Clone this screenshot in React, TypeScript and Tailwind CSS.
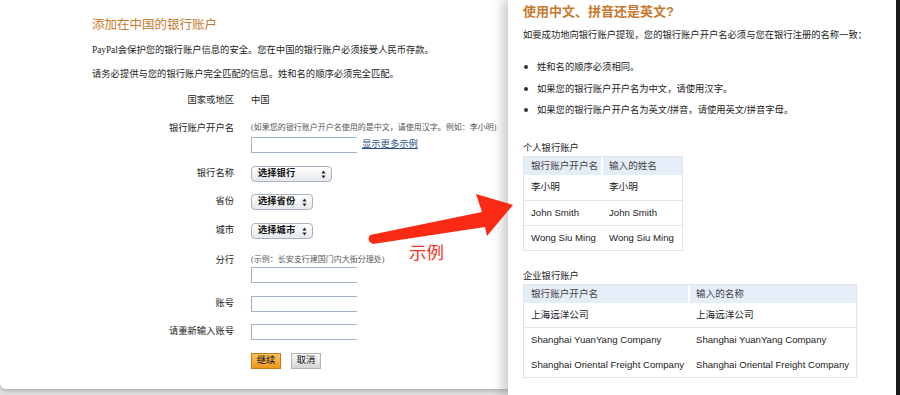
import React from 'react';

const serifCjk = "font-['Liberation_Serif','Noto_Sans_CJK_SC',serif]";
const sansCjk = "font-['Liberation_Sans','Noto_Sans_CJK_SC',sans-serif]";

interface SelectProps {
  label: string;
  width: string;
}

const SelectBox: React.FC<SelectProps> = ({ label, width }) => (
  <div
    className={`${width} h-[16px] flex items-center justify-between pl-[6px] pr-[5px] rounded-[4px] border border-[#a9b4c3] bg-gradient-to-b from-white to-[#e6e8ec] text-[9.3px] font-semibold leading-none text-[#111]`}
  >
    <span>{label}</span>
    <svg width="5" height="9" viewBox="0 0 5 9">
      <path d="M2.5 0.5 L4.5 3.5 L0.5 3.5 Z" fill="#222" />
      <path d="M2.5 8.5 L4.5 5.5 L0.5 5.5 Z" fill="#222" />
    </svg>
  </div>
);

const TextInput: React.FC = () => (
  <div className="w-[106px] h-[16px] border border-r-0 border-[#a3b4c8] bg-white"></div>
);

const FormRow: React.FC<{ label: string; className?: string; children: React.ReactNode }> = ({
  label,
  className,
  children,
}) => (
  <div className={`grid grid-cols-[142px_1fr] gap-x-[17px] items-start ${className ?? ''}`}>
    <div className="text-right leading-[14px] text-[9.3px] text-[#222]">{label}</div>
    <div>{children}</div>
  </div>
);

const LeftPanel: React.FC = () => (
  <div
    className={`w-[508px] h-[389px] shrink-0 bg-white rounded-bl-[6px] shadow-[0_2px_4px_rgba(0,0,0,0.22)] pl-[92px] pt-[16px] ${serifCjk}`}
  >
    <h1 className="text-[12.5px] leading-[18px] text-[#c8782c]">添加在中国的银行账户</h1>
    <p className="mt-[9px] text-[9.3px] leading-[14px] text-[#222]">
      PayPal会保护您的银行账户信息的安全。您在中国的银行账户必须接受人民币存款。
    </p>
    <p className="mt-[10px] text-[9.3px] leading-[14px] text-[#222]">
      请务必提供与您的银行账户完全匹配的信息。姓和名的顺序必须完全匹配。
    </p>

    {/* Form */}
    <div className="mt-[12px] flex flex-col">
      <FormRow label="国家或地区">
        <div className="leading-[14px] text-[9.3px] text-[#222]">中国</div>
      </FormRow>

      <FormRow label="银行账户开户名" className="mt-[14px]">
        <div className="leading-[14px] text-[8px] text-[#555] whitespace-nowrap">
          (如果您的银行账户开户名使用的是中文，请使用汉字。例如：李小明)
        </div>
        <div className="mt-[2px] flex items-center gap-[5px]">
          <TextInput />
          <a className="text-[9.3px] leading-none text-[#2b4f8c] underline">显示更多示例</a>
        </div>
      </FormRow>

      <FormRow label="银行名称" className="mt-[13px]">
        <SelectBox label="选择银行" width="w-[81px]" />
      </FormRow>

      <FormRow label="省份" className="mt-[12px]">
        <SelectBox label="选择省份" width="w-[62px]" />
      </FormRow>

      <FormRow label="城市" className="mt-[13px]">
        <SelectBox label="选择城市" width="w-[62px]" />
      </FormRow>

      <FormRow label="分行" className="mt-[14px]">
        <div className="leading-[14px] text-[8px] text-[#555] whitespace-nowrap">
          (示例：长安支行建国门内大街分理处)
        </div>
        <TextInput />
      </FormRow>

      <FormRow label="账号" className="mt-[13px]">
        <TextInput />
      </FormRow>

      <FormRow label="请重新输入账号" className="mt-[12px]">
        <TextInput />
      </FormRow>

      <FormRow label="" className="mt-[13px]">
        <div className="flex gap-[10px]">
          <button className="w-[30px] h-[16px] border border-[#c27a1a] bg-gradient-to-b from-[#fbc25a] to-[#ef9618] text-[9.3px] leading-none text-[#111]">
            继续
          </button>
          <button className="w-[30px] h-[16px] border border-[#b3b3b3] bg-gradient-to-b from-[#fafafa] to-[#d4d4d4] text-[9.3px] leading-none text-[#111]">
            取消
          </button>
        </div>
      </FormRow>
    </div>
  </div>
);

const bullets = [
  '姓和名的顺序必须相同。',
  '如果您的银行账户开户名为中文，请使用汉字。',
  '如果您的银行账户开户名为英文/拼音，请使用英文/拼音字母。',
];

const personalRows = [
  ['李小明', '李小明'],
  ['John Smith', 'John Smith'],
  ['Wong Siu Ming', 'Wong Siu Ming'],
];

const RightPanel: React.FC = () => (
  <div
    className={`relative z-10 flex-1 h-full bg-white border-r-[4px] border-[#1b1b1b] shadow-[-6px_0_10px_rgba(0,0,0,0.2)] pl-[15px] pt-[4px] text-[#222] ${sansCjk}`}
  >
    <h2 className="text-[13px] leading-[16px] font-semibold text-[#c8782c]">使用中文、拼音还是英文?</h2>
    <p className="mt-[8px] text-[9.3px] leading-[14px]">
      如要成功地向银行账户提现，您的银行账户开户名必须与您在银行注册的名称一致：
    </p>
    <ul className="mt-[18px] flex flex-col gap-[7.5px] text-[9.3px] leading-[14px]">
      {bullets.map((b) => (
        <li key={b} className="flex items-center">
          <span className="w-[4px] h-[4px] ml-[1px] rounded-full bg-[#333]"></span>
          <span className="ml-[9px]">{b}</span>
        </li>
      ))}
    </ul>

    {/* Personal account */}
    <div className="mt-[24px] text-[9.3px] leading-[14px]">个人银行账户</div>
    <div className="mt-[1px] w-[160px] border border-[#e3e3e3] text-[9.6px]">
      <div className="grid grid-cols-[79px_1fr] h-[18px] bg-[#e4edf8] text-[#444] leading-[18px]">
        <div className="pl-[7px] border-r-2 border-white">银行账户开户名</div>
        <div className="pl-[6px]">输入的姓名</div>
      </div>
      {personalRows.map((r, i) => (
        <div
          key={i}
          className={`grid grid-cols-[79px_1fr] h-[25px] items-center ${i > 0 ? 'border-t border-[#e3e3e3]' : ''}`}
        >
          <div className="pl-[7px]">{r[0]}</div>
          <div className="pl-[6px]">{r[1]}</div>
        </div>
      ))}
    </div>

    {/* Company account */}
    <div className="mt-[18px] text-[9.3px] leading-[14px]">企业银行账户</div>
    <div className="mt-[1px] w-[334px] border border-[#e3e3e3] text-[9.6px]">
      <div className="grid grid-cols-[166px_1fr] h-[18px] bg-[#e4edf8] text-[#444] leading-[18px]">
        <div className="pl-[7px] border-r-2 border-white">银行账户开户名</div>
        <div className="pl-[6px]">输入的名称</div>
      </div>
      <div className="grid grid-cols-[166px_1fr] h-[25px] items-center border-b border-[#e3e3e3]">
        <div className="pl-[7px]">上海远洋公司</div>
        <div className="pl-[6px]">上海远洋公司</div>
      </div>
      <div className="grid grid-cols-[166px_1fr] h-[25px] items-center">
        <div className="pl-[7px]">Shanghai YuanYang Company</div>
        <div className="pl-[6px]">Shanghai YuanYang Company</div>
      </div>
      <div className="grid grid-cols-[166px_1fr] h-[24px] items-center">
        <div className="pl-[7px] whitespace-nowrap">Shanghai Oriental Freight Company</div>
        <div className="pl-[6px] whitespace-nowrap">Shanghai Oriental Freight Company</div>
      </div>
    </div>
  </div>
);

const Annotation: React.FC = () => (
  <>
    <svg
      className="absolute left-0 top-0 z-20 pointer-events-none"
      width="900"
      height="395"
      viewBox="0 0 900 395"
    >
      <path
        d="M370 235 L482 212 L476 194 L513 205 L487 236 L485 227 L373 244 Q366 241 370 235 Z"
        fill="#fb2a14"
      />
    </svg>
    <div className="absolute left-[409px] top-[242px] z-20 text-[17.5px] leading-[20px] text-[#f3321f] font-['Noto_Sans_CJK_SC',sans-serif]">
      示例
    </div>
  </>
);

export default function App() {
  return (
    <div className="relative w-[900px] h-[395px] overflow-hidden bg-[#e2e2e2] flex">
      <LeftPanel />
      <RightPanel />
      <Annotation />
    </div>
  );
}
